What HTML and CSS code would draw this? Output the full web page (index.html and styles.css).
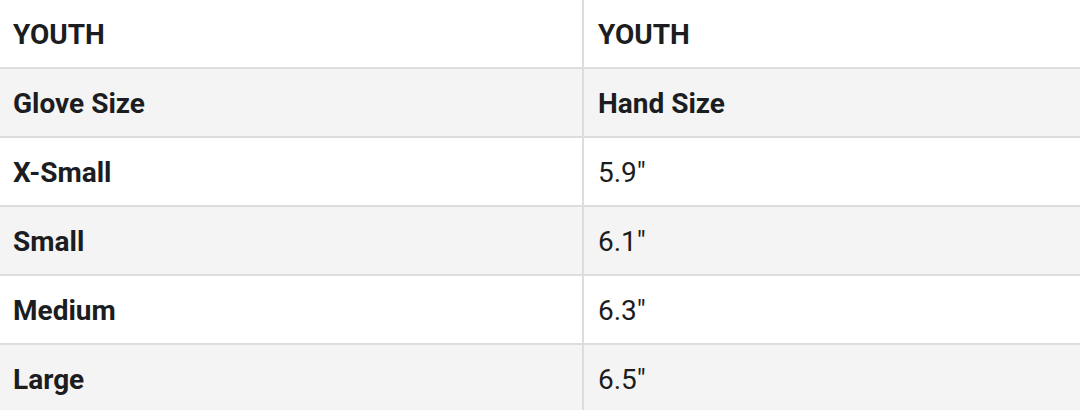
FILE: index.html
```html
<!DOCTYPE html>
<html>
<head>
<meta charset="utf-8">
<link rel="stylesheet" href="styles.css">
</head>
<body>
<table class="size-table">
  <colgroup><col class="col-a"><col class="col-b"></colgroup>
  <tbody>
    <tr class="row light"><td class="cell head">YOUTH</td><td class="cell head right">YOUTH</td></tr>
    <tr class="row shade"><td class="cell head">Glove Size</td><td class="cell head right">Hand Size</td></tr>
    <tr class="row light"><td class="cell head">X-Small</td><td class="cell right">5.9"</td></tr>
    <tr class="row shade"><td class="cell head">Small</td><td class="cell right">6.1"</td></tr>
    <tr class="row light"><td class="cell head">Medium</td><td class="cell right">6.3"</td></tr>
    <tr class="row shade"><td class="cell head">Large</td><td class="cell right">6.5"</td></tr>
  </tbody>
</table>
</body>
</html>
```
FILE: styles.css
```css
html, body {
  margin: 0;
  padding: 0;
  background: #ffffff;
}
.size-table {
  width: 1080px;
  border-collapse: separate;
  border-spacing: 0;
  table-layout: fixed;
  font-family: Roboto, "Liberation Sans", sans-serif;
  color: #1b1d21;
}
.col-a { width: 582px; }
.col-b { width: 498px; }
.row.light { background: #ffffff; }
.row.shade { background: #f4f4f4; }
.cell {
  box-sizing: border-box;
  height: 69px;
  padding: 3px 13px 0;
  vertical-align: middle;
  font-size: 28px;
  font-weight: 400;
  line-height: 1;
  border-top: 2px solid #dddddd;
}
.row:first-child .cell {
  border-top: none;
  height: 67px;
}
.cell.head { font-weight: 700; }
.cell.right {
  border-left: 2px solid #dddddd;
  padding-left: 14px;
}
```
